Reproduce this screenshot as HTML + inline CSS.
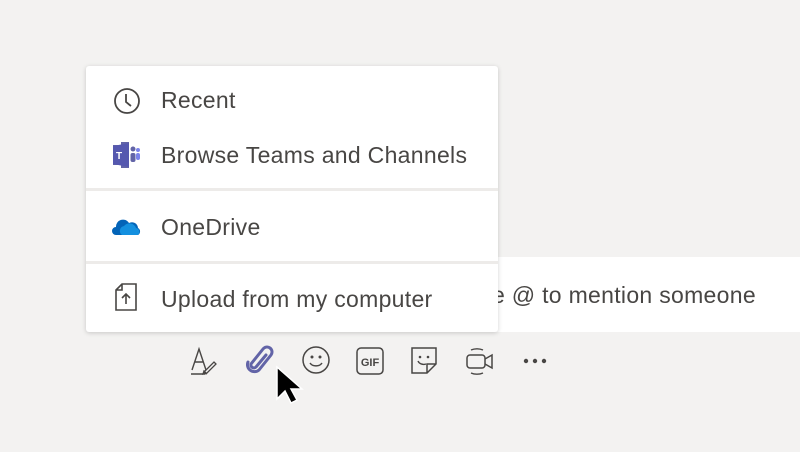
<!DOCTYPE html>
<html><head><style>
body{margin:0;width:800px;height:452px;background:#f3f2f1;position:relative;overflow:hidden;font-family:"Liberation Sans",sans-serif;}
.input{position:absolute;left:470px;top:257px;width:340px;height:75px;background:#fff;}
.input span{position:absolute;left:22px;top:25px;font-size:23px;letter-spacing:0.3px;color:#484644;white-space:nowrap;}
.menu{position:absolute;left:86px;top:66px;width:412px;height:266px;background:#fff;border-radius:3px;box-shadow:0 1px 5px rgba(0,0,0,.18);}
.row{position:absolute;left:75px;font-size:23px;letter-spacing:0.3px;color:#484644;white-space:nowrap;}
.div{position:absolute;left:0;width:412px;height:3px;background:#edebe9;}
svg{position:absolute;}
</style></head><body>
<div class="input"><span>e @ to mention someone</span></div>
<div class="menu">
<svg style="left:27px;top:21px" width="28" height="28" viewBox="0 0 28 28"><circle cx="14" cy="14" r="12" fill="none" stroke="#484644" stroke-width="1.8"/><path d="M13 7v8l5 4" fill="none" stroke="#484644" stroke-width="1.8"/></svg>
<div class="row" style="top:21px">Recent</div>
<svg style="left:27px;top:76px" width="28" height="26" viewBox="0 0 28 26"><rect x="0" y="3" width="16" height="20" fill="#6264a7"/><rect x="8" y="0" width="8" height="26" fill="#6264a7"/><path d="M0 4l16-3v24L0 22z" fill="#5558af"/><text x="3" y="17" font-size="10" font-weight="bold" fill="#fff" font-family="Liberation Sans">T</text><circle cx="20" cy="7" r="2.5" fill="#6264a7"/><rect x="17.5" y="11" width="5" height="9" rx="2" fill="#6264a7"/><circle cx="25" cy="8" r="2" fill="#7b83eb"/><rect x="23" y="11" width="4" height="7" rx="2" fill="#7b83eb"/></svg>
<div class="row" style="top:76px">Browse Teams and Channels</div>
<div class="div" style="top:122px"></div>
<svg style="left:26px;top:151px" width="30" height="20" viewBox="0 0 30 20"><path d="M4 18a4 4 0 0 1 0-8 7 7 0 0 1 13-4 6 6 0 0 1 9 5 4 4 0 0 1 0 7z" fill="#0364b8"/><path d="M10 18a5 5 0 0 1 2-9 7 7 0 0 1 12 2 4 4 0 0 1 2 7z" fill="#1490df"/></svg>
<div class="row" style="top:148px">OneDrive</div>
<div class="div" style="top:195px"></div>
<svg style="left:27px;top:216px" width="26" height="30" viewBox="0 0 26 30"><path d="M9 2h14v26H3V8z M9 2v6H3" fill="none" stroke="#484644" stroke-width="1.6"/><path d="M13 22v-9M9 16l4-4 4 4" fill="none" stroke="#484644" stroke-width="1.6"/></svg>
<div class="row" style="top:220px">Upload from my computer</div>
</div>
<!-- toolbar -->
<svg style="left:190px;top:346px" width="30" height="30" viewBox="0 0 30 30"><path d="M2 24L9 3l7 21M5 16h8M1 28h14" fill="none" stroke="#484644" stroke-width="1.4"/><path d="M14 26l10-10 2 2-10 10z M13 28l1-3 2 2z" fill="none" stroke="#484644" stroke-width="1.3"/></svg>
<svg style="left:246px;top:345px" width="30" height="32" viewBox="0 0 30 32"><path d="M20 10l-10 12a3 3 0 0 1-5-3L17 4a5 5 0 0 1 8 6L13 25a7 7 0 0 1-11-8" fill="none" stroke="#6264a7" stroke-width="3" stroke-linecap="round"/></svg>
<svg style="left:275px;top:365px" width="32" height="44" viewBox="0 0 32 44"><path d="M2 2v32l8-8 6 12 6-3-6-11h11z" fill="#000" stroke="#fff" stroke-width="1.5"/></svg>
<svg style="left:302px;top:346px" width="30" height="30" viewBox="0 0 30 30"><circle cx="14" cy="14" r="13" fill="none" stroke="#484644" stroke-width="1.5"/><circle cx="10" cy="11" r="1.5" fill="#484644"/><circle cx="18" cy="11" r="1.5" fill="#484644"/><path d="M8 17a7 6 0 0 0 12 0" fill="none" stroke="#484644" stroke-width="1.5"/></svg>
<svg style="left:356px;top:347px" width="30" height="30" viewBox="0 0 30 30"><rect x="1" y="1" width="26" height="26" rx="4" fill="none" stroke="#484644" stroke-width="1.5"/><text x="14" y="19" text-anchor="middle" font-size="11" font-weight="bold" fill="#484644" font-family="Liberation Sans">GIF</text></svg>
<svg style="left:411px;top:347px" width="30" height="30" viewBox="0 0 30 30"><path d="M1 1h24v16l-9 9H1z M16 26v-9h9" fill="none" stroke="#484644" stroke-width="1.5"/><circle cx="9" cy="10" r="1.3" fill="#484644"/><circle cx="17" cy="10" r="1.3" fill="#484644"/><path d="M7 14a6 5 0 0 0 8 3" fill="none" stroke="#484644" stroke-width="1.4"/></svg>
<svg style="left:466px;top:346px" width="30" height="32" viewBox="0 0 30 32"><rect x="1" y="9" width="18" height="13" rx="3" fill="none" stroke="#484644" stroke-width="1.5"/><path d="M19 13l7-4v13l-7-4" fill="none" stroke="#484644" stroke-width="1.5"/><path d="M5 4a10 6 0 0 1 12 0M5 27a10 6 0 0 0 12 0" fill="none" stroke="#484644" stroke-width="1.4"/></svg>
<svg style="left:522px;top:356px" width="30" height="10" viewBox="0 0 30 10"><circle cx="4" cy="5" r="2.2" fill="#484644"/><circle cx="13" cy="5" r="2.2" fill="#484644"/><circle cx="22" cy="5" r="2.2" fill="#484644"/></svg>
</body></html>
